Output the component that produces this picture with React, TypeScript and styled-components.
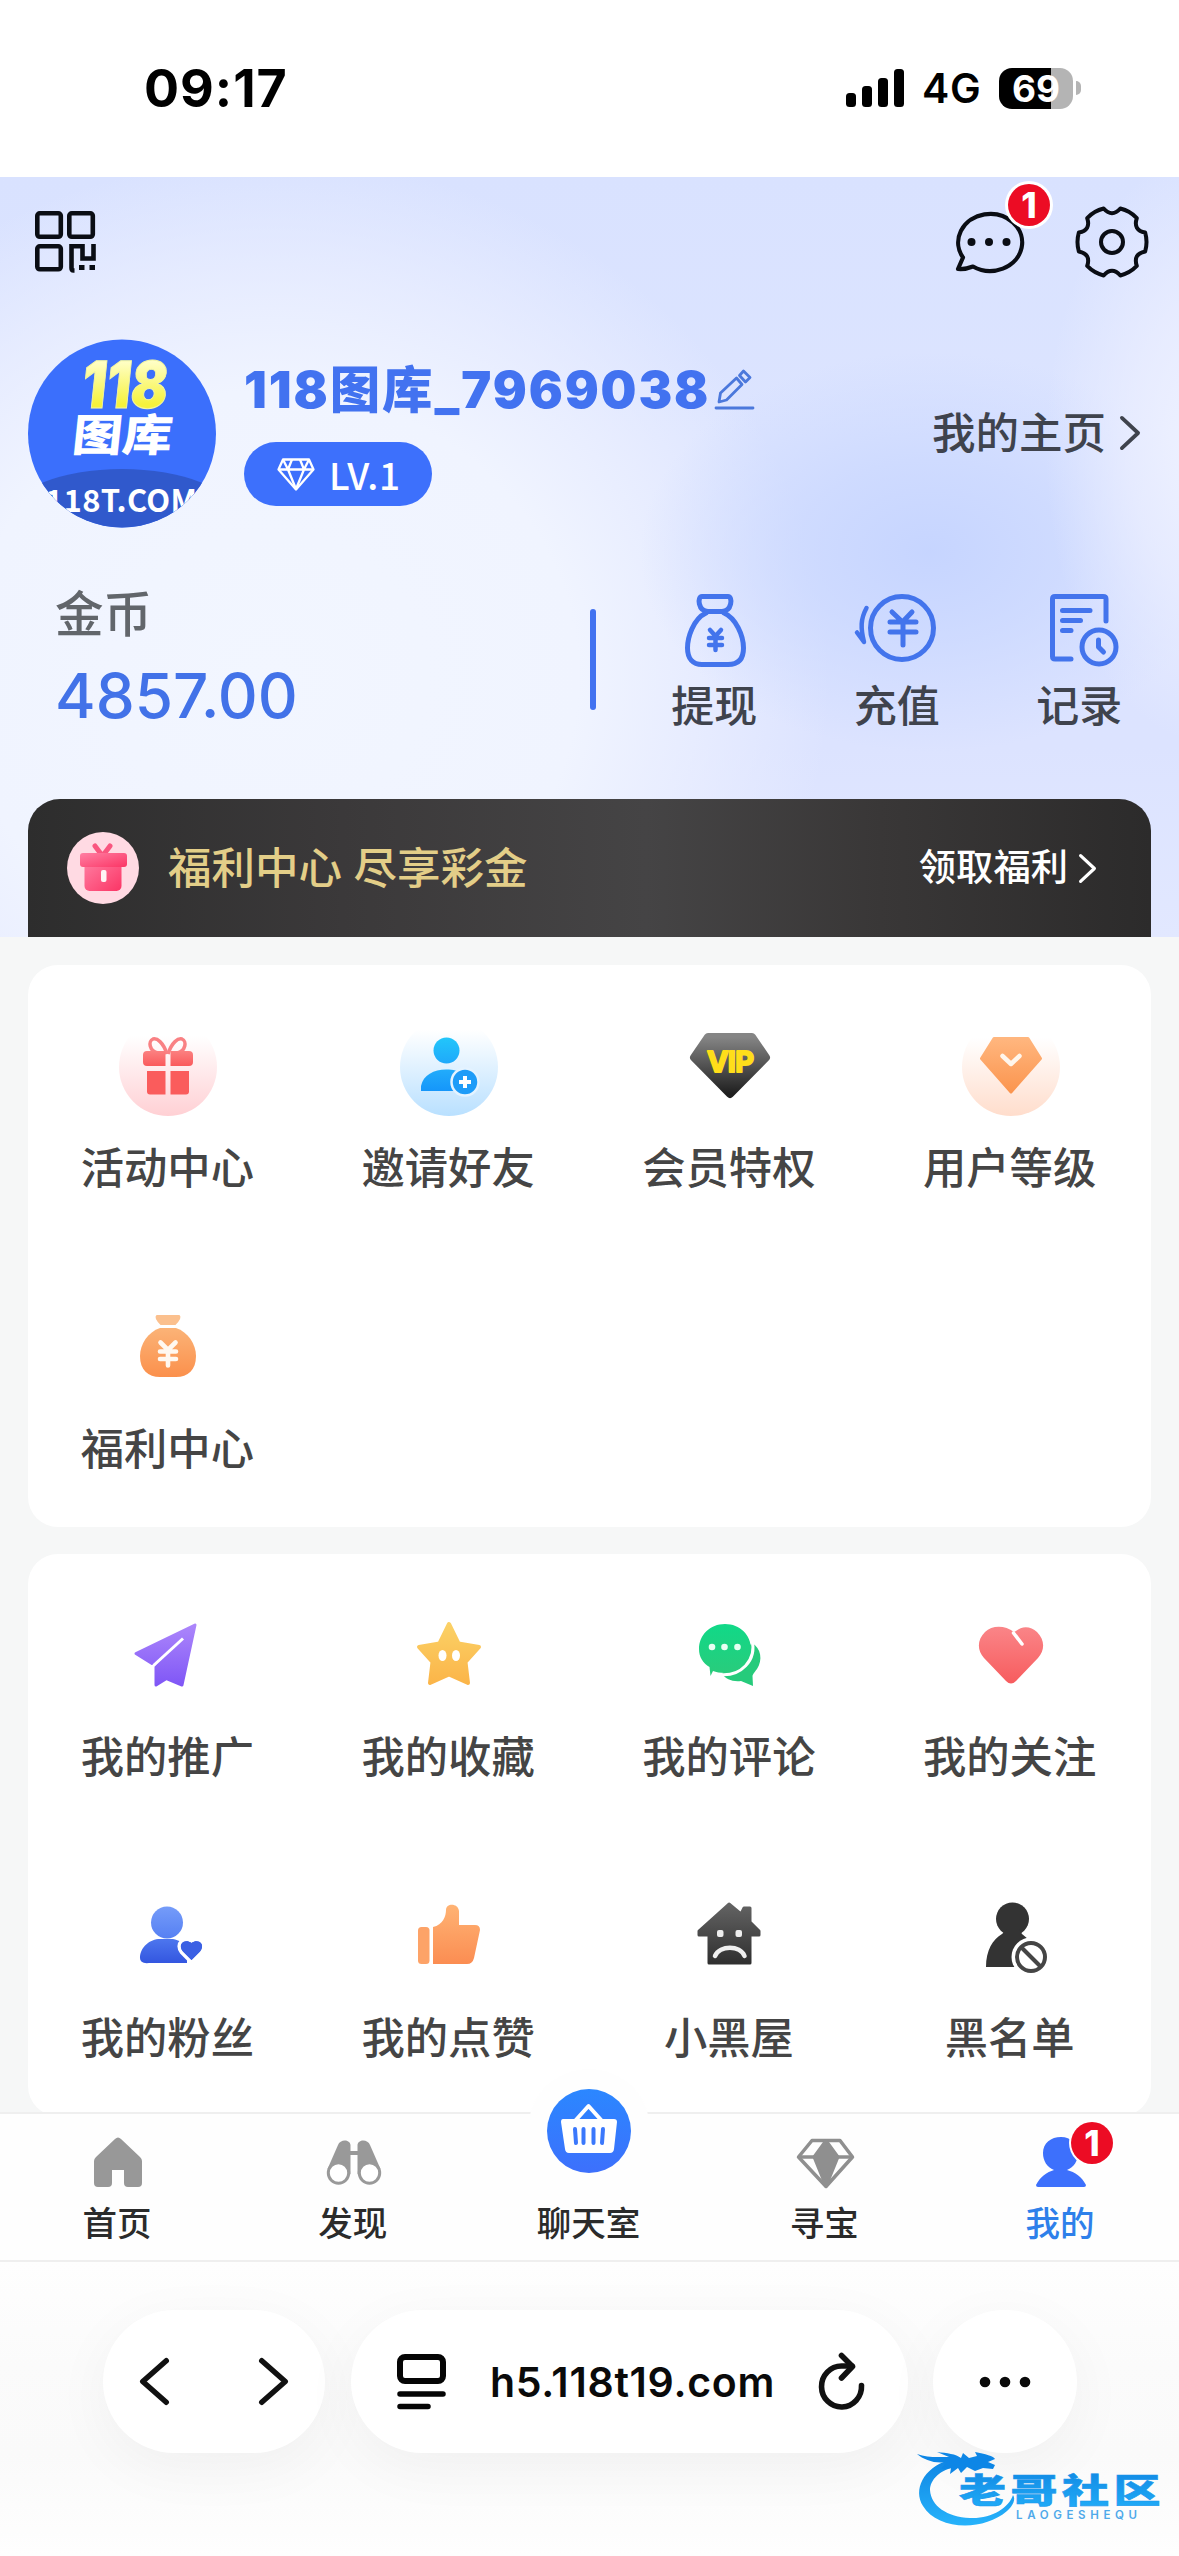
import React from 'react';
import styled, { createGlobalStyle } from 'styled-components';

const sans = `Inter, "Noto Sans CJK SC", "Liberation Sans", sans-serif`;
const cjk = `"Noto Sans CJK SC", Inter, sans-serif`;

const GlobalStyle = createGlobalStyle`
  * { box-sizing: border-box; }
  body { margin: 0; background: #fff; }
  svg { display: block; flex: none; overflow: visible; }
`;

const Page = styled.div`
  position: relative;
  width: 1179px;
  height: 2556px;
  display: flex;
  flex-direction: column;
  overflow: hidden;
  background: #fff;
  font-family: ${sans};
`;

/* ---------- status bar ---------- */

const StatusBar = styled.div`
  height: 177px;
  flex: none;
  display: flex;
  align-items: flex-start;
  justify-content: space-between;
  padding: 58px 98px 0 144px;
  color: #000;
`;
const Clock = styled.div`
  font-size: 52px;
  line-height: 61px;
  font-weight: 700;
  letter-spacing: 1px;
`;
const StatusRight = styled.div`
  display: flex;
  align-items: center;
  height: 60px;
`;
const Network = styled.div`
  margin-left: 17px;
  width: 59px;
  font-size: 41px;
  line-height: 62px;
  font-weight: 600;
  letter-spacing: 0.6px;
`;
const Battery = styled.div`
  margin-left: 18px;
  width: 74px;
  height: 41px;
  border-radius: 13px;
  background: linear-gradient(90deg, #000 70%, #b4b4b4 70%);
  color: #fff;
  font-size: 37px;
  line-height: 41px;
  font-weight: 700;
  text-align: center;
`;
const BatteryTip = styled.div`
  margin-left: 3px;
  width: 5px;
  height: 14px;
  border-radius: 0 5px 5px 0;
  background: #b4b4b4;
`;

/* ---------- header ---------- */

const Header = styled.header`
  height: 760px;
  flex: none;
  display: flex;
  flex-direction: column;
  background:
    radial-gradient(ellipse 170px 300px at 1215px 270px, rgba(240, 243, 255, 0.95) 0%, rgba(236, 239, 255, 0.7) 50%, rgba(232, 235, 255, 0) 100%),
    radial-gradient(ellipse 290px 200px at 930px 375px, rgba(197, 212, 255, 0.95) 0%, rgba(201, 215, 255, 0.7) 45%, rgba(216, 224, 255, 0) 100%),
    radial-gradient(ellipse 560px 520px at 270px 500px, #f2f6ff 0%, #f0f4ff 55%, rgba(236, 240, 255, 0.65) 78%, rgba(222, 229, 254, 0) 100%),
    linear-gradient(180deg, #d9e2ff 0%, #dce4ff 35%, #dce3ff 75%, #e2e8ff 100%);
`;
const TopBar = styled.div`
  height: 162px;
  flex: none;
  display: flex;
  align-items: flex-start;
  justify-content: space-between;
  padding: 29px 31px 0 33px;
`;
const TopActions = styled.div`
  display: flex;
  gap: 52px;
`;
const BadgeAnchor = styled.div`
  position: relative;
  height: 70px;
`;
const Badge = styled.span<{ $x: number; $y: number; $ring: number }>`
  position: absolute;
  left: ${p => p.$x}px;
  top: ${p => p.$y}px;
  width: 42px;
  height: 42px;
  border-radius: 50%;
  background: #ec0c24;
  box-shadow: 0 0 0 ${p => p.$ring}px #fff;
  color: #fff;
  font-size: 35px;
  line-height: 42px;
  font-weight: 800;
  text-align: center;
`;
const Profile = styled.div`
  height: 189px;
  flex: none;
  display: flex;
  padding: 0 39px 0 28px;
`;
const ProfileInfo = styled.div`
  margin-left: 28px;
  display: flex;
  flex-direction: column;
  align-items: flex-start;
`;
const NameRow = styled.div`
  display: flex;
  align-items: center;
  height: 60px;
  margin: 21px 0 22px;
`;
const UserName = styled.div`
  width: 471px;
  font-size: 50.5px;
  line-height: 60px;
  font-weight: 900;
  letter-spacing: 1.9px;
  white-space: nowrap;
  color: #4272f0;
`;
const LevelPill = styled.div`
  width: 188px;
  height: 64px;
  border-radius: 32px;
  background: #3d70fc;
  color: #fff;
  display: flex;
  align-items: center;
  padding-left: 33px;
  gap: 14px;
  font-family: ${cjk};
  font-size: 37px;
  line-height: 60px;
  font-weight: 500;
  letter-spacing: 0.8px;
`;
const HomeLink = styled.div`
  margin-left: auto;
  margin-top: 64px;
  height: 60px;
  display: flex;
  align-items: center;
  gap: 14px;
  font-size: 43.5px;
  line-height: 60px;
  font-weight: 500;
  color: #3f434d;
`;
const Wallet = styled.div`
  height: 271px;
  flex: none;
  display: flex;
  padding: 57px 8px 0 55px;
`;
const Balance = styled.div`
  width: 535px;
`;
const BalanceLabel = styled.div`
  font-size: 48.5px;
  line-height: 60px;
  font-weight: 500;
  color: #62666b;
`;
const BalanceValue = styled.div`
  margin-top: 13px;
  font-size: 62px;
  line-height: 76px;
  font-weight: 500;
  color: #4272e8;
`;
const Divider = styled.div`
  width: 6px;
  height: 101px;
  margin-top: 24px;
  border-radius: 3px;
  background: #4272f0;
`;
const WalletActions = styled.div`
  flex: 1;
  display: grid;
  grid-template-columns: repeat(3, 182.5px);
  margin-left: 27px;
  padding-top: 5px;
`;
const WalletAction = styled.div`
  display: flex;
  flex-direction: column;
  align-items: center;
  font-size: 43px;
  line-height: 56px;
  font-weight: 500;
  color: #3f434d;
  svg { margin-bottom: 8px; }
`;
const Banner = styled.div`
  flex: none;
  height: 138px;
  margin: 0 28px;
  padding: 0 55px 0 39px;
  border-radius: 32px 32px 0 0;
  display: flex;
  align-items: center;
  background: linear-gradient(90deg, #2d2d2d 0%, #3b393a 28%, #454445 55%, #393737 76%, #2c2b2b 100%);
`;
const BannerTitle = styled.div`
  margin-left: 29px;
  font-size: 43.5px;
  line-height: 60px;
  font-weight: 500;
  color: #e3ce88;
  white-space: nowrap;
`;
const BannerLink = styled.div`
  margin-left: auto;
  display: flex;
  align-items: center;
  gap: 11px;
  font-size: 37.3px;
  line-height: 60px;
  font-weight: 500;
  color: #fff;
`;

/* ---------- menu cards ---------- */

const Content = styled.main`
  height: 1175px;
  flex: none;
  overflow: hidden;
  display: flex;
  flex-direction: column;
  gap: 27px;
  padding: 28px 28px 0;
  background: #f6f7f7;
`;
const Card = styled.section`
  height: 562px;
  flex: none;
  border-radius: 30px;
  background: #fff;
  display: grid;
  grid-template-columns: repeat(4, 1fr);
  grid-auto-rows: 281px;
`;
const MenuItem = styled.div`
  display: flex;
  flex-direction: column;
  align-items: center;
  padding-top: 53px;
`;
const MenuLabel = styled.div`
  margin-top: 24px;
  padding-right: 2px;
  font-size: 43.3px;
  line-height: 56px;
  font-weight: 500;
  color: #454545;
`;

/* ---------- tab bar ---------- */

const TabBar = styled.nav`
  position: relative;
  height: 150px;
  flex: none;
  display: grid;
  grid-template-columns: repeat(5, 1fr);
  background: #fefefe;
  border-top: 2px solid #efefef;
  border-bottom: 2px solid #efefef;
`;
const Tab = styled.div<{ $active?: boolean }>`
  position: relative;
  display: flex;
  flex-direction: column;
  align-items: center;
  padding-top: 22px;
  font-size: 34.5px;
  line-height: 46px;
  font-weight: 500;
  color: ${p => (p.$active ? '#2e80ea' : '#2b2b2b')};
`;
const TabIcon = styled.div`
  position: relative;
  height: 52px;
  margin-bottom: 13px;
`;
const TabLabel = styled.div`
  padding-right: 2px;
`;
const CenterButton = styled.div`
  position: absolute;
  left: 50%;
  top: -45px;
  width: 122px;
  height: 122px;
  margin-left: -61px;
  border-radius: 50%;
  background: #fefefe;
  display: flex;
  align-items: center;
  justify-content: center;
`;
const CenterDisc = styled.div`
  width: 84px;
  height: 84px;
  margin-top: 1px;
  border-radius: 50%;
  background: linear-gradient(180deg, #2b87ff, #3d70fc);
`;

/* ---------- browser bar ---------- */

const BrowserBar = styled.div`
  flex: 1;
  display: flex;
  align-items: flex-start;
  padding: 48px 102px 0 103px;
  background: linear-gradient(180deg, #fefefe 0%, #fbfbfb 35%, #fafafa 65%, #fefefe 100%);
`;
const Pill = styled.div<{ $w: number; $ml?: number }>`
  width: ${p => p.$w}px;
  height: 143px;
  margin-left: ${p => p.$ml ?? 0}px;
  border-radius: 72px;
  background: #fff;
  box-shadow: 0 14px 60px rgba(0, 0, 0, 0.045);
  display: flex;
  align-items: center;
`;
const NavPill = styled(Pill)`
  justify-content: space-between;
  padding: 0 37px;
`;
const AddressPill = styled(Pill)`
  padding: 0 43px 0 46px;
  justify-content: space-between;
`;
const MorePill = styled(Pill)`
  justify-content: center;
`;
const Url = styled.div`
  font-size: 41px;
  line-height: 50px;
  font-weight: 600;
  letter-spacing: 0.7px;
  color: #0a0a0a;
`;
const Watermark = styled.div`
  position: absolute;
  left: 905px;
  top: 2440px;
`;

/* ---------- icons ---------- */

const Grad = ({ id, from, to, start = 0 }: { id: string; from: string; to: string; start?: number }) => (
  <linearGradient id={id} x1="0" y1="0" x2="0" y2="1">
    <stop offset={start} stopColor={from} />
    <stop offset="1" stopColor={to} />
  </linearGradient>
);

const SignalIcon = () => (
  <svg width="59" height="38" viewBox="0 0 59 38" fill="#000">
    <rect x="0" y="24" width="10" height="14" rx="3.5" />
    <rect x="16" y="17" width="10" height="21" rx="3.5" />
    <rect x="32" y="9" width="10" height="29" rx="3.5" />
    <rect x="48" y="0" width="10" height="38" rx="3.5" />
  </svg>
);

const Chevron = ({ w, h, s, c, left }: { w: number; h: number; s: number; c: string; left?: boolean }) => (
  <svg width={w} height={h} fill="none" stroke={c} strokeWidth={s} strokeLinecap="round" strokeLinejoin="round">
    <path
      d={
        left
          ? `M${w - s / 2} ${s / 2}L${s / 2} ${h / 2}L${w - s / 2} ${h - s / 2}`
          : `M${s / 2} ${s / 2}L${w - s / 2} ${h / 2}L${s / 2} ${h - s / 2}`
      }
    />
  </svg>
);

const QrIcon = () => (
  <svg width="62" height="70" viewBox="0 0 62 70" fill="none" stroke="#0a0d14" strokeWidth="4.6">
    <rect x="4.3" y="7.3" width="23.5" height="23.5" rx="2.5" />
    <rect x="36.3" y="7.3" width="23.5" height="23.5" rx="2.5" />
    <rect x="4.3" y="40.3" width="23.5" height="23" rx="2.5" />
    <path d="M41.5 64.5H40.5Q38.5 64.5 38.5 62V40.3H49.5V52.5H60.5V38" />
    <path d="M46 61.5h5.500M56.5 61.5h5.500" strokeWidth="5" />
  </svg>
);

const MessageIcon = () => (
  <svg width="70" height="70" viewBox="0 0 70 70">
    <path
      d="M4 63L9 51.5A32 28.5 0 1 1 19 60.5C14 62.5 9 63.5 4 63Z"
      fill="none"
      stroke="#0a0d14"
      strokeWidth="4.2"
      strokeLinejoin="round"
    />
    <g fill="#0a0d14">
      <circle cx="17.5" cy="36" r="4" />
      <circle cx="35" cy="36" r="4" />
      <circle cx="52.5" cy="36" r="4" />
    </g>
  </svg>
);

const polar = (deg: number, r: number) => {
  const a = (deg * Math.PI) / 180;
  return `${(36 + r * Math.cos(a)).toFixed(2)} ${(36 + r * Math.sin(a)).toFixed(2)}`;
};
const gearPath =
  `M${polar(-16, 34.5)}` +
  [0, 60, 120, 180, 240, 300]
    .map(a => `A34.5 34.5 0 0 1 ${polar(a + 16, 34.5)}Q${polar(a + 30, 24)} ${polar(a + 44, 34.5)}`)
    .join('') +
  'Z';
const GearIcon = () => (
  <svg width="72" height="72" viewBox="0 0 72 72" fill="none" stroke="#0a0d14" strokeWidth="4" strokeLinejoin="round">
    <path d={gearPath} />
    <circle cx="36" cy="36" r="11" />
  </svg>
);

const Avatar = () => (
  <svg width="188" height="189" viewBox="0 0 188 189">
    <defs>
      <clipPath id="avatarClip"><circle cx="94" cy="94.5" r="94" /></clipPath>
      <linearGradient id="avatarNum" x1="0" y1="0" x2="0" y2="1">
        <stop offset="0.2" stopColor="#ffffc8" />
        <stop offset="0.75" stopColor="#f6f23c" />
      </linearGradient>
    </defs>
    <g clipPath="url(#avatarClip)">
      <rect width="188" height="189" fill="#3b6ffc" />
      <ellipse cx="94" cy="176" rx="112" ry="46" fill="#3059cc" />
      <g transform="translate(52 69) skewX(-6)">
        <text fontFamily="Inter, sans-serif" fontSize="65" fontWeight="900" fill="url(#avatarNum)" stroke="#f3f5a0" strokeWidth="1" textLength="86" lengthAdjust="spacingAndGlyphs">118</text>
      </g>
      <g transform="translate(43 112) skewX(-6) scale(1 0.88)">
        <text fontFamily='"Noto Sans CJK SC"' fontSize="50" fontWeight="900" fill="#fff">图库</text>
      </g>
      <text x="17" y="173" fontFamily='"Noto Sans CJK SC"' fontSize="31" fontWeight="700" fill="#fff" textLength="152">118T.COM</text>
    </g>
  </svg>
);

const PencilIcon = () => (
  <svg width="40" height="42" viewBox="0 0 40 42" fill="none" stroke="#4b78dc" strokeWidth="2.8" strokeLinejoin="round" strokeLinecap="round">
    <path d="M4 33L5.5 24L21.5 9L27 15.5L11.5 31L4 33Z" />
    <path d="M24.5 6.5L28.5 2L35 8.5L30.5 13Z" />
    <path d="M1 39H38" />
  </svg>
);

const GemIcon = () => (
  <svg width="38" height="33" viewBox="0 0 38 33" fill="none" stroke="#fff" strokeWidth="2.3" strokeLinejoin="round">
    <path d="M6 1.5H32L36.5 11.5L19 31.5L1.5 11.5Z" />
    <path d="M1.5 11.5H36.5M11 11.5L19 31L27 11.5M6 1.5L11 11.5L15 1.5M23 1.5L27 11.5L32 1.5" />
  </svg>
);

const lineProps = {
  fill: 'none',
  stroke: '#4374ec',
  strokeWidth: 5,
  strokeLinecap: 'round' as const,
  strokeLinejoin: 'round' as const,
};
const WithdrawIcon = () => (
  <svg width="90" height="80" viewBox="0 0 90 80" {...lineProps}>
    <path d="M33 6.5H59C64 6.5 63 21 53 21.5H39C29 21 28 6.5 33 6.5Z" />
    <path d="M37 23C24 29 18.5 48 18.5 58C18.5 69 24 74.5 33 74.5H59C69 74.5 74.5 69 74.5 58C74.5 46 67 28 55 23" />
    <path d="M41 40L46.5 46L52 40M46.5 46V60M40 48H53M40 55H53" strokeWidth="4.5" />
  </svg>
);
const RechargeIcon = () => (
  <svg width="90" height="80" viewBox="0 0 90 80" {...lineProps}>
    <circle cx="50" cy="38" r="31.5" />
    <path d="M14.5 18C8.5 29 8.5 38 12 52L5 42.5" strokeWidth="4.5" />
    <path d="M40 22L50.5 32L60 22M51 32V55M38 32H64M38 42H64" />
  </svg>
);
const RecordIcon = () => (
  <svg width="90" height="80" viewBox="0 0 90 80" {...lineProps}>
    <path d="M72 31V9Q72 6.5 69 6.5H21Q18.5 6.5 18.5 9V66.5Q18.5 69 21 69H37" />
    <path d="M28.5 20.5H56M28.5 30.5H46.5M28.5 40.5H37" />
    <circle cx="65" cy="57" r="17" />
    <path d="M64.5 50V57L69.5 62" />
  </svg>
);

const BannerGift = () => (
  <svg width="72" height="72" viewBox="0 0 72 72">
    <defs>
      <linearGradient id="bannerGift" x1="0" y1="0" x2="1" y2="1">
        <stop offset="0" stopColor="#ff7fa3" />
        <stop offset="1" stopColor="#fb3565" />
      </linearGradient>
    </defs>
    <circle cx="36" cy="36" r="36" fill="#ffdae3" />
    <path d="M28 14L35.5 24L43 14" fill="none" stroke="#f9567f" strokeWidth="5" strokeLinecap="round" strokeLinejoin="round" />
    <rect x="17.5" y="28" width="37" height="31" rx="5" fill="url(#bannerGift)" />
    <rect x="13" y="21" width="47" height="14" rx="3" fill="url(#bannerGift)" />
    <rect x="34" y="38" width="5.5" height="12" rx="2" fill="#fff3f5" />
  </svg>
);

const Box = ({ children }: { children: React.ReactNode }) => (
  <svg width="98" height="98" viewBox="0 0 98 98">{children}</svg>
);

const GiftIcon = () => (
  <Box>
    <defs>
      <Grad id="gA" from="#ffffff" to="#ffd0d4" start={0.18} />
      <Grad id="gB" from="#fb8080" to="#fa5a5c" />
    </defs>
    <circle cx="49" cy="49" r="49" fill="url(#gA)" />
    <g fill="none" stroke="#f98083" strokeWidth="3.5">
      <path d="M48 36C44 24 38 20 34 21C29 23 30 33 39 35" />
      <path d="M49 36C53 24 59 20 63 21C68 23 67 33 58 35" />
    </g>
    <path d="M28 33H46.5V48H28Q24 48 24 44V37Q24 33 28 33ZM51.5 33H70Q74 33 74 37V44Q74 48 70 48H51.5Z" fill="url(#gB)" />
    <path d="M28 53H46.5V76.5H31Q28 76.5 28 73.5ZM51.5 53H70V73.5Q70 76.5 67 76.5H51.5Z" fill="#fa5c5c" />
  </Box>
);
const InviteIcon = () => (
  <Box>
    <defs>
      <Grad id="iA" from="#ffffff" to="#b9e0ff" start={0.12} />
      <Grad id="iB" from="#22c6fa" to="#1fa9fb" />
      <Grad id="iC" from="#22acfb" to="#1596fa" />
    </defs>
    <circle cx="49" cy="49" r="49" fill="url(#iA)" />
    <circle cx="46.5" cy="32.5" r="13" fill="url(#iB)" />
    <path d="M21 73V68C23 57 34 51.5 46 51.5C54 51.5 58 53 60 55L57 73Z" fill="url(#iC)" />
    <circle cx="65" cy="64" r="13.5" fill="#1e9cf8" stroke="#e4f3ff" strokeWidth="2.5" />
    <path d="M65 58V70M59 64H71" stroke="#fff" strokeWidth="4" />
  </Box>
);
const VipIcon = () => (
  <Box>
    <defs><Grad id="vA" from="#858585" to="#1f1f1f" /></defs>
    <path d="M27 19H71L85 39.5L49 76L13 39.5Z" fill="url(#vA)" stroke="url(#vA)" strokeWidth="8" strokeLinejoin="round" />
    <text x="26" y="54" fontFamily="Inter, sans-serif" fontSize="29" fontWeight="700" fill="#ffde1a" stroke="#ffde1a" strokeWidth="2" strokeLinejoin="round" textLength="47">VIP</text>
  </Box>
);
const LevelIcon = () => (
  <Box>
    <defs>
      <Grad id="lA" from="#ffffff" to="#ffddcc" start={0.2} />
      <Grad id="lB" from="#ffb67e" to="#fb954f" />
    </defs>
    <circle cx="49" cy="49" r="49" fill="url(#lA)" />
    <path d="M32 20.5H66L78.5 40.5L49 74L19.5 40.5Z" fill="url(#lB)" stroke="url(#lB)" strokeWidth="3" strokeLinejoin="round" />
    <path d="M40.5 38L49 46L57.5 38" fill="none" stroke="#fff6ec" strokeWidth="4.5" strokeLinecap="round" strokeLinejoin="round" />
  </Box>
);
const BagIcon = () => (
  <Box>
    <defs><Grad id="mA" from="#fbb377" to="#fb904c" /></defs>
    <path d="M38 17H60Q62 19 56 25H42Q36 19 38 17Z" fill="#fbc08e" stroke="#fbc08e" strokeWidth="2" strokeLinejoin="round" />
    <path d="M41 29H57C69 33 77 45 77 57C77 71 69 78 57 78H41C29 78 21 71 21 57C21 45 29 33 41 29Z" fill="url(#mA)" />
    <path d="M41.5 43.5L49 51L56.5 43.5M49 51V66.5M41 52.5H57M41 60H57" fill="none" stroke="#fff8f0" strokeWidth="4.6" strokeLinecap="round" />
  </Box>
);
const PlaneIcon = () => (
  <Box>
    <defs><Grad id="pA" from="#ac86fb" to="#8057f6" /></defs>
    <path d="M76 18L17 46.5L33 56.5L64 30.5L37 60V78L47.5 71.5L63 78Z" fill="url(#pA)" stroke="url(#pA)" strokeWidth="3" strokeLinejoin="round" />
    <path d="M64 31.5L34.5 58.5" stroke="#fff" strokeWidth="3" />
  </Box>
);
const StarIcon = () => (
  <Box>
    <defs><Grad id="sA" from="#fbd166" to="#fbb549" /></defs>
    <path d="M49 17L58.5 36.5L79 40L65.5 55L68 76L49 67.5L30 76L32.5 55L19 40L39.5 36.5Z" fill="url(#sA)" stroke="url(#sA)" strokeWidth="4" strokeLinejoin="round" />
    <ellipse cx="42.5" cy="48.5" rx="4" ry="5.5" fill="#fff" />
    <ellipse cx="56" cy="48.5" rx="4" ry="5.5" fill="#fff" />
  </Box>
);
const CommentIcon = () => (
  <Box>
    <defs><Grad id="cA" from="#10d988" to="#2acb7b" /></defs>
    <path d="M71 36C80 41 82 53 76 62C73 66 72 67 71.5 69L72 79L60 74C51 75 45 72 41 67Z" fill="#26cb7b" />
    <path d="M44 17C59 17 70 28 70 42C70 57 58 66 44 66C39 66 35 65 32 64L29.5 69L28.5 60C22 56 18 50 18 42C18 28 29 17 44 17Z" fill="url(#cA)" />
    <path d="M71 33C76 53 60 70 38 67.5" fill="none" stroke="#fff" strokeWidth="3" />
    <g fill="#e6fff2"><circle cx="31" cy="40" r="3.3" /><circle cx="43.5" cy="40" r="3.3" /><circle cx="56.5" cy="40" r="3.3" /></g>
  </Box>
);
const HeartIcon = () => (
  <Box>
    <defs><Grad id="hA" from="#fa8588" to="#f75c5e" /></defs>
    <path d="M52 25C43 18 30 18 23 25C15 33 15 43 22 51L44 74Q49 79 54 74L76 51C83 43 83 33 75 25C69 19 60 18.5 54 24Z" fill="url(#hA)" />
    <path d="M51.5 26L60 37" stroke="#fff" strokeWidth="3.5" strokeLinecap="round" />
  </Box>
);
const FansIcon = () => (
  <Box>
    <defs><Grad id="fA" from="#759cf9" to="#5680f3" /><Grad id="fB" from="#4d76ee" to="#3356e0" /></defs>
    <path d="M21 70C21 59 31 51 41 51H54C60 52 65 55 68 60V75H30Q21 76 21 70Z" fill="url(#fB)" />
    <circle cx="48" cy="34.5" r="16" fill="url(#fA)" />
    <path d="M72.5 72L64 63.5C58 56 66 50 72.5 55C79 50 87 56 81 63.5Z" fill="#3b60e4" stroke="#fff" strokeWidth="7" paintOrder="stroke" />
    <path d="M60 76H82V80H60Z" fill="#fff" />
    <path d="M72.5 72L64 63.5C58 56 66 50 72.5 55C79 50 87 56 81 63.5Z" fill="#3b60e4" />
  </Box>
);
const LikeIcon = () => (
  <Box>
    <defs><Grad id="kA" from="#ffb374" to="#fb8d52" /></defs>
    <rect x="18" y="39" width="11.5" height="37" rx="3.5" fill="#fda368" />
    <path d="M33 39C43 37 46 28 46 22C46 15 58 15 59 23V37H75Q80 37 80 42L74 70Q72.5 76 67 76H33Z" fill="url(#kA)" />
  </Box>
);
const SadHouseIcon = () => (
  <Box>
    <defs><Grad id="dA" from="#636363" to="#303030" /></defs>
    <path d="M48 16L60 26L63 20H69V34L78 43V47H69V75H28V47H18V43Z" fill="url(#dA)" stroke="url(#dA)" strokeWidth="3" strokeLinejoin="round" />
    <rect x="36" y="42" width="6.5" height="7" rx="2" fill="#eee" />
    <rect x="54.5" y="42" width="6.5" height="7" rx="2" fill="#eee" />
    <path d="M34 68C39 57 59 57 63.5 68" fill="none" stroke="#efefef" strokeWidth="4.5" strokeLinecap="round" />
  </Box>
);
const BlacklistIcon = () => (
  <Box>
    <circle cx="50.5" cy="31" r="16.5" fill="#333" />
    <path d="M24 79C24 62 31 51 40 46L45 41H57L60 46L66 51L72 60L55 79Z" fill="#333" />
    <circle cx="69" cy="69" r="19.5" fill="#fff" />
    <circle cx="69" cy="69" r="14" fill="#fff" stroke="#454545" strokeWidth="4" />
    <path d="M59.5 59.5L78.5 78.5" stroke="#454545" strokeWidth="4" />
  </Box>
);

const HomeIcon = () => (
  <svg width="60" height="52" viewBox="0 0 60 52">
    <path d="M27 3Q30 0 33 3L52 21Q54 23 54 25V47Q54 51 50 51H40Q36 51 36 47V34H24V47Q24 51 20 51H10Q6 51 6 47V25Q6 23 8 21Z" fill="#989898" />
  </svg>
);
const BinocularsIcon = () => (
  <svg width="60" height="52" viewBox="0 0 60 52">
    <g fill="#999">
      <path d="M26.5 38V9C26 3 16 3 14 9L3.5 33L14 47Z" />
      <path d="M33.5 38V9C34 3 44 3 46 9L56.5 33L46 47Z" />
      <rect x="25" y="15" width="10" height="4" />
    </g>
    <g fill="#fff" stroke="#999" strokeWidth="3">
      <circle cx="14.5" cy="37" r="10.2" />
      <circle cx="45.5" cy="37" r="10.2" />
    </g>
  </svg>
);
const TreasureIcon = () => (
  <svg width="60" height="52" viewBox="0 0 60 52" stroke="#8f8f8f" strokeLinejoin="round">
    <path d="M17 4.5H45L57.5 21L31 50.5L3.5 21Z" fill="none" strokeWidth="3.5" />
    <path d="M31 4.5L43 21L31 50.5L19 21Z" fill="#8f8f8f" strokeWidth="3" />
    <path d="M4 21H57" strokeWidth="3.5" />
  </svg>
);
const MineIcon = () => (
  <svg width="60" height="52" viewBox="0 0 60 52" fill="#3d70fc">
    <path d="M5 49C9 41 16 36 23 34C16 31 12 25 12 17C12 7 20 1 30 1C40 1 47 8 47 17C47 25 43 31 36 34C44 36 51 41 55 49Q55 51 53 51H7Q5 51 5 49Z" />
  </svg>
);
const BasketIcon = () => (
  <svg width="84" height="84" viewBox="0 0 84 84">
    <path d="M28 32L41.5 17L55 32" fill="none" stroke="#fff" strokeWidth="4" strokeLinejoin="round" />
    <path d="M16 30H67Q70 30 70 33L67 60Q66.5 64 63 64H22Q18.5 64 18 60L14 33Q14 30 16 30Z" fill="#fff" />
    <path d="M28 40L29 54M36.5 40V54M46.5 40V54M56 40L55 54" stroke="#3b78fc" strokeWidth="4" strokeLinecap="round" />
  </svg>
);

const ReaderIcon = () => (
  <svg width="49" height="56" viewBox="0 0 49 56" fill="none" stroke="#050505">
    <rect x="3" y="3" width="43" height="24" rx="5" strokeWidth="6" />
    <path d="M3 40H46M3 52.5H31" strokeWidth="5.5" strokeLinecap="round" />
  </svg>
);
const ReloadIcon = () => (
  <svg width="46" height="56" viewBox="0 0 46 56" fill="none" stroke="#111" strokeWidth="5.6" strokeLinecap="round" strokeLinejoin="round">
    <path d="M42.5 31.5A20 20.5 0 1 1 22.5 12H33" />
    <path d="M22.5 1.5L33.5 12.5L22.5 24" />
  </svg>
);
const DotsIcon = () => (
  <svg width="52" height="12" viewBox="0 0 52 12" fill="#0a0a0a">
    <circle cx="6" cy="6" r="5.3" />
    <circle cx="26" cy="6" r="5.3" />
    <circle cx="46" cy="6" r="5.3" />
  </svg>
);

const WatermarkLogo = () => (
  <svg width="270" height="100" viewBox="0 0 270 100">
    <defs>
      <linearGradient id="wA" x1="0" y1="10" x2="0" y2="86" gradientUnits="userSpaceOnUse">
        <stop offset="0" stopColor="#0b7fe0" />
        <stop offset="1" stopColor="#27b3fb" />
      </linearGradient>
      <Grad id="wB" from="#0f83e0" to="#22b0fa" />
    </defs>
    <path d="M44 20C18 28 8 50 18 66C32 90 78 92 102 71C108 66 111 59 108 55C104 68 86 79 65 78C42 77 26 66 25 50C25 40 35 29 52 27Z" fill="url(#wA)" />
    <path d="M12 14C22 18 33 17 44 17L32 12C42 13 51 14 56 18L58 13L64 18L72 16L70 12C80 14 89 16 90 19L83 22L90 25L88 29L78 28L70 31L62 27L56 33L53 28L45 34L46 28L36 29L42 22C30 24 19 20 12 14Z" fill="#0d86e6" />
    <g transform="translate(54 63) scale(1 0.72)">
      <text fontFamily='"Noto Sans CJK SC"' fontSize="47" fontWeight="900" fill="url(#wB)" stroke="#1a97ec" strokeWidth="0.8" letterSpacing="4.5">老哥社区</text>
    </g>
    <text x="111" y="78.5" fontFamily="Inter, sans-serif" fontSize="11.5" fontWeight="600" fill="#4fa9ea" textLength="121">LAOGESHEQU</text>
  </svg>
);

/* ---------- data ---------- */

const services = [
  { label: '活动中心', Icon: GiftIcon },
  { label: '邀请好友', Icon: InviteIcon },
  { label: '会员特权', Icon: VipIcon },
  { label: '用户等级', Icon: LevelIcon },
  { label: '福利中心', Icon: BagIcon },
];
const personal = [
  { label: '我的推广', Icon: PlaneIcon },
  { label: '我的收藏', Icon: StarIcon },
  { label: '我的评论', Icon: CommentIcon },
  { label: '我的关注', Icon: HeartIcon },
  { label: '我的粉丝', Icon: FansIcon },
  { label: '我的点赞', Icon: LikeIcon },
  { label: '小黑屋', Icon: SadHouseIcon },
  { label: '黑名单', Icon: BlacklistIcon },
];
const walletActions = [
  { label: '提现', Icon: WithdrawIcon },
  { label: '充值', Icon: RechargeIcon },
  { label: '记录', Icon: RecordIcon },
];

const MenuCard = ({ items }: { items: { label: string; Icon: React.FC }[] }) => (
  <Card>
    {items.map(({ label, Icon }) => (
      <MenuItem key={label}>
        <Icon />
        <MenuLabel>{label}</MenuLabel>
      </MenuItem>
    ))}
  </Card>
);

export default function App() {
  return (
    <Page>
      <GlobalStyle />
      <StatusBar>
        <Clock>09:17</Clock>
        <StatusRight>
          <SignalIcon />
          <Network>4G</Network>
          <Battery>69</Battery>
          <BatteryTip />
        </StatusRight>
      </StatusBar>

      <Header>
        <TopBar>
          <QrIcon />
          <TopActions>
            <BadgeAnchor>
              <MessageIcon />
              <Badge $x={54} $y={-22} $ring={3}>1</Badge>
            </BadgeAnchor>
            <GearIcon />
          </TopActions>
        </TopBar>
        <Profile>
          <Avatar />
          <ProfileInfo>
            <NameRow>
              <UserName>118图库_7969038</UserName>
              <PencilIcon />
            </NameRow>
            <LevelPill>
              <GemIcon />
              LV.1
            </LevelPill>
          </ProfileInfo>
          <HomeLink>
            我的主页
            <Chevron w={20} h={34} s={3.8} c="#3f434d" />
          </HomeLink>
        </Profile>
        <Wallet>
          <Balance>
            <BalanceLabel>金币</BalanceLabel>
            <BalanceValue>4857.00</BalanceValue>
          </Balance>
          <Divider />
          <WalletActions>
            {walletActions.map(({ label, Icon }) => (
              <WalletAction key={label}>
                <Icon />
                {label}
              </WalletAction>
            ))}
          </WalletActions>
        </Wallet>
        <Banner>
          <BannerGift />
          <BannerTitle>福利中心 尽享彩金</BannerTitle>
          <BannerLink>
            领取福利
            <Chevron w={17} h={29} s={3.2} c="#fff" />
          </BannerLink>
        </Banner>
      </Header>

      <Content>
        <MenuCard items={services} />
        <MenuCard items={personal} />
      </Content>

      <TabBar>
        <Tab>
          <TabIcon><HomeIcon /></TabIcon>
          <TabLabel>首页</TabLabel>
        </Tab>
        <Tab>
          <TabIcon><BinocularsIcon /></TabIcon>
          <TabLabel>发现</TabLabel>
        </Tab>
        <Tab>
          <CenterButton>
            <CenterDisc><BasketIcon /></CenterDisc>
          </CenterButton>
          <TabIcon />
          <TabLabel>聊天室</TabLabel>
        </Tab>
        <Tab>
          <TabIcon><TreasureIcon /></TabIcon>
          <TabLabel>寻宝</TabLabel>
        </Tab>
        <Tab $active>
          <TabIcon>
            <MineIcon />
            <Badge $x={40} $y={-14} $ring={2}>1</Badge>
          </TabIcon>
          <TabLabel>我的</TabLabel>
        </Tab>
      </TabBar>

      <BrowserBar>
        <NavPill $w={222}>
          <Chevron w={29} h={47} s={5.5} c="#111" left />
          <Chevron w={29} h={47} s={5.5} c="#111" />
        </NavPill>
        <AddressPill $w={557} $ml={26}>
          <ReaderIcon />
          <Url>h5.118t19.com</Url>
          <ReloadIcon />
        </AddressPill>
        <MorePill $w={144} $ml={25}>
          <DotsIcon />
        </MorePill>
      </BrowserBar>

      <Watermark>
        <WatermarkLogo />
      </Watermark>
    </Page>
  );
}
